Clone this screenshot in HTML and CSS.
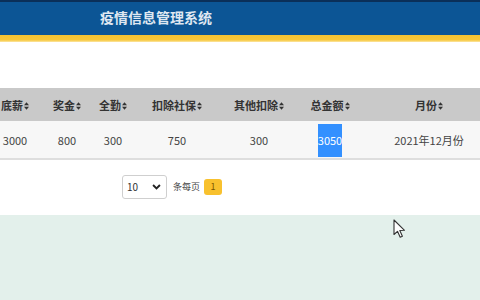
FILE: index.html
```html
<!DOCTYPE html>
<html>
<head>
<meta charset="utf-8">
<link rel="stylesheet" href="styles.css">
</head>
<body>
<div class="page">
  <header class="topbar">
    <h1 class="title">疫情信息管理系统</h1>
  </header>
  <div class="stripe"></div>
  <main class="content">
    <div class="table-wrap">
      <table class="grid">
        <colgroup>
          <col style="width:52px"><col style="width:52px"><col style="width:40px"><col style="width:88px"><col style="width:76px"><col style="width:66px"><col style="width:132px">
        </colgroup>
        <thead>
          <tr>
            <th>底薪<svg class="sort" viewBox="0 0 5 8"><path d="M0 3.3L2.5 0.3L5 3.3Z M0 4.7L2.5 7.7L5 4.7Z"/></svg></th>
            <th>奖金<svg class="sort" viewBox="0 0 5 8"><path d="M0 3.3L2.5 0.3L5 3.3Z M0 4.7L2.5 7.7L5 4.7Z"/></svg></th>
            <th>全勤<svg class="sort" viewBox="0 0 5 8"><path d="M0 3.3L2.5 0.3L5 3.3Z M0 4.7L2.5 7.7L5 4.7Z"/></svg></th>
            <th>扣除社保<svg class="sort" viewBox="0 0 5 8"><path d="M0 3.3L2.5 0.3L5 3.3Z M0 4.7L2.5 7.7L5 4.7Z"/></svg></th>
            <th>其他扣除<svg class="sort" viewBox="0 0 5 8"><path d="M0 3.3L2.5 0.3L5 3.3Z M0 4.7L2.5 7.7L5 4.7Z"/></svg></th>
            <th>总金额<svg class="sort" viewBox="0 0 5 8"><path d="M0 3.3L2.5 0.3L5 3.3Z M0 4.7L2.5 7.7L5 4.7Z"/></svg></th>
            <th>月份<svg class="sort" viewBox="0 0 5 8"><path d="M0 3.3L2.5 0.3L5 3.3Z M0 4.7L2.5 7.7L5 4.7Z"/></svg></th>
          </tr>
        </thead>
        <tbody>
          <tr>
            <td>3000</td>
            <td>800</td>
            <td>300</td>
            <td>750</td>
            <td>300</td>
            <td><span class="selected">3050</span></td>
            <td>2021年12月份</td>
          </tr>
        </tbody>
      </table>
    </div>
    <div class="pager">
      <div class="select">
        <span class="select-val">10</span>
        <svg class="chev" viewBox="0 0 10 7"><path d="M1 1.2L5 5.2L9 1.2" fill="none" stroke="#222" stroke-width="2.2"/></svg>
      </div>
      <span class="per">条每页</span>
      <span class="pagenum">1</span>
    </div>
  </main>
  <div class="footer-area"></div>
  <svg class="cursor" viewBox="0 0 13 20"><path d="M1 1L1 15.5L4.5 12.3L7.2 18.3L9.4 17.3L6.8 11.5L11.5 11.3Z" fill="#fff" stroke="#333" stroke-width="1.1" stroke-linejoin="round"/></svg>
</div>
</body>
</html>
```

FILE: styles.css
```css
* { box-sizing: border-box; }
html, body { margin: 0; padding: 0; }
body {
  width: 480px;
  height: 300px;
  overflow: hidden;
  font-family: "Noto Sans CJK SC", "Noto Sans", sans-serif;
  background: #fff;
}
.page {
  position: relative;
  height: 300px;
  display: flex;
  flex-direction: column;
}
.topbar {
  height: 35px;
  background: #0c5595;
  border-top: 2px solid #0b2f59;
  display: flex;
  align-items: center;
  padding-left: 100px;
}
.title {
  margin: 0;
  font-size: 14px;
  font-weight: bold;
  color: #dfe7f1;
  letter-spacing: 0;
  line-height: 1;
  margin-top: -3px;
}
.stripe {
  height: 7px;
  background: linear-gradient(#f4c232 0, #f7c638 70%, #fbe7a6 100%);
}
.content {
  padding-top: 46px;
  background: #fff;
}
.table-wrap {
  margin-left: -11px;
  width: 506px;
}
.grid {
  width: 506px;
  table-layout: fixed;
  border-collapse: collapse;
}
.grid th {
  height: 33px;
  background: #c9c9c9;
  font-size: 11px;
  font-weight: bold;
  color: #333;
  text-align: center;
  padding: 0;
  white-space: nowrap;
}
.sort {
  width: 5px;
  height: 8px;
  margin-left: 1px;
  vertical-align: -0.5px;
  fill: #333;
}
.grid td {
  height: 38px;
  background: #f7f7f7;
  border-bottom: 2px solid #dedede;
  font-size: 11px;
  color: #444;
  text-align: center;
  padding: 0;
  white-space: nowrap;
}
.selected {
  display: inline-block;
  background: #3390ff;
  color: #fff;
  line-height: 33px;
  padding: 0 0;
  margin-top: 2px;
}
.pager {
  height: 55px;
  display: flex;
  align-items: center;
  padding-left: 122px;
  padding-bottom: 2px;
}
.select {
  width: 45px;
  height: 24px;
  border: 1px solid #cfcfcf;
  border-radius: 3px;
  display: flex;
  align-items: center;
  justify-content: space-between;
  padding: 0 5px 0 4px;
  background: #fff;
}
.select-val {
  font-size: 10px;
  color: #333;
}
.chev {
  width: 9px;
  height: 6px;
}
.per {
  margin-left: 6px;
  font-size: 9px;
  color: #444;
}
.pagenum {
  margin-left: 4px;
  width: 18px;
  height: 16px;
  background: #f8c12e;
  border-radius: 3px;
  font-size: 9px;
  color: #7a5600;
  display: flex;
  align-items: center;
  justify-content: center;
}
.footer-area {
  flex: 1;
  background: #e3f0eb;
}
.cursor {
  position: absolute;
  left: 393px;
  top: 219px;
  width: 13px;
  height: 20px;
}
```
